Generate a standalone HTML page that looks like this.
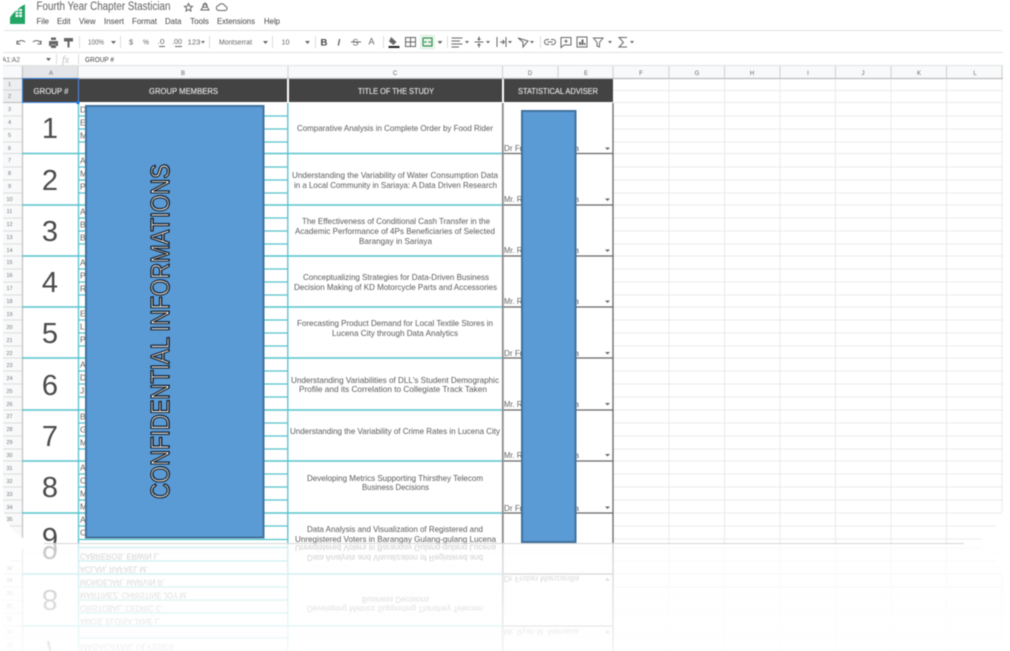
<!DOCTYPE html>
<html><head><meta charset="utf-8"><title>Fourth Year Chapter Stastician</title>
<style>
html,body{margin:0;padding:0;background:#fff;width:1010px;height:651px;overflow:hidden}
svg{display:block;filter:blur(.45px);overflow:hidden}
text{font-family:"Liberation Sans",sans-serif}
.t{font-size:8.4px;fill:#5a5a5a}
.m{font-size:8.5px;fill:#666}
.n{font-size:29px;fill:#4a4a4a;text-anchor:middle}
.h{font-size:8px;fill:#e8e8e8;stroke:#e8e8e8;stroke-width:.12}
.c{font-size:6px;fill:#666;text-anchor:middle}
.r{font-size:5.5px;fill:#777;text-anchor:middle}
.b{font-size:8.5px;fill:#444}
.k{font-size:7.5px;fill:#666}
.a{fill:#666}
.i{fill:none;stroke:#666;stroke-width:1}
</style></head><body>
<svg width="1010" height="651" viewBox="0 0 1010 651" xmlns="http://www.w3.org/2000/svg">
<defs>
<clipPath id="cp"><rect x="3" y="0" width="1000" height="543.5" rx="40" ry="40"/></clipPath>
<clipPath id="rp"><rect x="3" y="544" width="1000" height="107"/></clipPath>
<linearGradient id="fade" x1="0" y1="0" x2="0" y2="1"><stop offset="0" stop-color="#fff" stop-opacity=".68"/><stop offset="1" stop-color="#fff" stop-opacity=".9"/></linearGradient>
</defs>

<g clip-path="url(#cp)">
<rect x="0" y="0" width="1010" height="544" fill="#fff"/>
<!-- top chrome -->
<path d="M10 24V3H25V24Z" fill="#23a566"/>
<path d="M15.5 9H22V17H15.5Z" fill="#fff"/>
<path d="M15.5 11.5H22M15.5 14.3H22M18.7 9V17" stroke="#23a566" stroke-width=".9"/>
<text x="36.5" y="10" font-size="11.5" fill="#5f5f5f" textLength="134" lengthAdjust="spacingAndGlyphs">Fourth Year Chapter Stastician</text>
<path class="i" d="M188.500 3.500L189.700 6.100L192.500 6.400L190.400 8.300L191 11L188.500 9.600L186 11L186.600 8.300L184.500 6.400L187.300 6.100Z" stroke-width=".8"/>
<path class="i" d="M205 3L209 10H201ZM205 7.500a2 2 0 1 1 .1 0" stroke-width=".8"/>
<path class="i" d="M219 10.500a2.500 2.500 0 0 1 -.3 -5a3.500 3.500 0 0 1 6.300 .6a2.200 2.200 0 0 1 -.3 4.400Z" stroke-width=".8"/>
<text class="b" x="36.500" y="24" textLength="12.500" lengthAdjust="spacingAndGlyphs">File</text>
<text class="b" x="57" y="24" textLength="13.500" lengthAdjust="spacingAndGlyphs">Edit</text>
<text class="b" x="79" y="24" textLength="16.500" lengthAdjust="spacingAndGlyphs">View</text>
<text class="b" x="104" y="24" textLength="20" lengthAdjust="spacingAndGlyphs">Insert</text>
<text class="b" x="132" y="24" textLength="25" lengthAdjust="spacingAndGlyphs">Format</text>
<text class="b" x="165" y="24" textLength="16.500" lengthAdjust="spacingAndGlyphs">Data</text>
<text class="b" x="190" y="24" textLength="19" lengthAdjust="spacingAndGlyphs">Tools</text>
<text class="b" x="217" y="24" textLength="38" lengthAdjust="spacingAndGlyphs">Extensions</text>
<text class="b" x="264" y="24" textLength="16" lengthAdjust="spacingAndGlyphs">Help</text>
<path d="M3 30.500H1003M3 52.500H1003M3 65.500H1003" stroke="#e2e2e2" stroke-width="1"/>

<!-- toolbar -->
<path class="i" stroke-width="1.100" d="M17 43.500a4.500 3.500 0 0 1 8 -1.500M17 40.500V44H20.500"/>
<path class="i" stroke-width="1.100" d="M41 43.500a4.500 3.500 0 0 0 -8 -1.500M41 40.500V44H37.500"/>
<path d="M49 41H58V46H56V44.500H51V46H49ZM51 37.500H56V40H51ZM51 45H56V48H51Z" class="a"/>
<path d="M64 38H73V41.500H64ZM67.500 41.500H69.500V47.500H67.500Z" class="a"/>
<path d="M79.500 36V48M120.500 36V48M209.500 36V48M272.500 36V48M315.500 36V48M383.500 36V48M447.500 36V48M540.500 36V48" stroke="#ddd"/>
<text class="k" x="88" y="44.500" textLength="16" lengthAdjust="spacingAndGlyphs">100%</text>
<path class="a" d="M111 41H116L113.500 44ZM263 41H268L265.500 44ZM305 41H310L307.500 44ZM201 41H205L203 43.500ZM437.500 41H442.500L440 44ZM465 41H469L467 43.500ZM486 41H490L488 43.500ZM508 41H512L510 43.500ZM530 41H534L532 43.500ZM608 41H612L610 43.500ZM630 41H634L632 43.500Z"/>
<text class="k" x="129" y="44.500">$</text>
<text class="k" x="143" y="44.500" textLength="6" lengthAdjust="spacingAndGlyphs">%</text>
<text class="k" x="157.500" y="44" textLength="7" lengthAdjust="spacingAndGlyphs">.0</text>
<path class="i" d="M159 46.500H165" stroke-width=".8"/>
<text class="k" x="172" y="44" textLength="10" lengthAdjust="spacingAndGlyphs">.00</text>
<path class="i" d="M175 46.500H182" stroke-width=".8"/>
<text class="k" x="187.500" y="44.500" textLength="13" lengthAdjust="spacingAndGlyphs">123</text>
<text class="k" x="219" y="44.500" textLength="33" lengthAdjust="spacingAndGlyphs">Montserrat</text>
<text class="k" x="281.500" y="44.500" textLength="8" lengthAdjust="spacingAndGlyphs">10</text>
<text x="320.500" y="45.500" font-size="9.500" font-weight="bold" fill="#444">B</text>
<text x="337.500" y="45.500" font-size="9.500" font-style="italic" font-weight="bold" fill="#666">I</text>
<text x="352.500" y="45.500" font-size="9" fill="#666">S</text>
<path d="M351 42H361" stroke="#666"/>
<text x="368.500" y="44.500" font-size="9" fill="#666">A</text>
<path d="M391 37L396.500 42L393.500 45L389 41.500Z" class="a"/>
<rect x="388.500" y="46" width="11" height="2" fill="#222"/>
<path class="i" d="M405.500 37.500H415.500V46.500H405.500ZM405.500 42H415.500M410.500 37.500V46.500"/>
<rect x="420" y="34.500" width="15" height="15" fill="#e6f4ea"/>
<path d="M423 38H432V46H423M423 38V46M432 38V46M424 42H426.500M428.500 42H431" fill="none" stroke="#188038" stroke-width="1"/>
<path class="i" d="M451.500 38H462.500M451.500 41H460M451.500 44H462.500M451.500 47H459"/>
<path class="i" d="M474.500 42H483.500M479 36.500V40.500M479 43.500V47.500"/>
<path class="a" d="M477 38.500H481L479 41ZM477 45.500H481L479 43Z"/>
<path class="i" d="M497 37V47M506 37V47M500 42H504.500M502.500 40L504.500 42L502.500 44"/>
<path class="i" d="M518 38L528 41L523 47L523 42ZM518 38L523 42"/>
<path class="i" stroke-width="1.100" d="M549 39.500H547a2.500 2.500 0 0 0 0 5H549M551 39.500H553a2.500 2.500 0 0 1 0 5H551M547.500 42H552.500"/>
<path class="i" d="M561 37.500H571V45H564L561 47.500ZM566 39.500V43M564.200 41.200H567.800"/>
<path class="i" d="M577 37H587V47H577Z"/><path class="a" d="M579 45V42H581V45ZM581.500 45V39.500H583.500V45ZM584 45V43H585.500V45Z"/>
<path class="i" d="M593.500 38H603L599.500 42.500V47L597 46V42.500Z"/>
<path class="i" stroke-width="1.100" d="M627 37.500H619L623.500 42.500L619 47H627"/>

<!-- formula bar -->
<text class="k" x="2" y="62" textLength="18" lengthAdjust="spacingAndGlyphs">A1:A2</text>
<path class="a" d="M46 58H51L48.500 61Z"/>
<path d="M56.500 54V64M78.500 54V64" stroke="#ddd"/>
<text x="62" y="63" font-size="10" font-style="italic" fill="#bbb" style="font-family:'Liberation Serif',serif">fx</text>
<text x="85" y="62" font-size="7.500" fill="#444" textLength="29" lengthAdjust="spacingAndGlyphs">GROUP #</text>

<!-- headers background -->
<rect x="3" y="66" width="1000" height="12" fill="#f8f9fa"/>
<rect x="22" y="66" width="56" height="12" fill="#e3e5e8"/>
<rect x="3" y="66" width="19" height="480" fill="#f8f9fa"/>
<rect x="3" y="78" width="19" height="24" fill="#eceef0"/>

<g id="grid">
<path d="M613 90.500H1003M613 102.500H1003M613 116H1003M613 129H1003M613 142H1003M613 153.500H1003M613 167H1003M613 180H1003M613 193H1003M613 205H1003M613 218H1003M613 231H1003M613 244H1003M613 256H1003M613 269H1003M613 282H1003M613 295H1003M613 307H1003M613 320H1003M613 333H1003M613 346H1003M613 358H1003M613 371H1003M613 384H1003M613 397H1003M613 410H1003M613 423H1003M613 436H1003M613 449H1003M613 461H1003M613 474H1003M613 487H1003M613 500H1003M613 513H1003M613 526H1003M613 539H1003" stroke="#ebebeb" stroke-width="1"/>
<path d="M669 78V544M724.500 78V544M780 78V544M835.500 78V544M891 78V544M946.500 78V544M1002 78V544" stroke="#ebebeb" stroke-width="1"/>
<path d="M3 116H22M3 129H22M3 142H22M3 153.500H22M3 167H22M3 180H22M3 193H22M3 205H22M3 218H22M3 231H22M3 244H22M3 256H22M3 269H22M3 282H22M3 295H22M3 307H22M3 320H22M3 333H22M3 346H22M3 358H22M3 371H22M3 384H22M3 397H22M3 410H22M3 423H22M3 436H22M3 449H22M3 461H22M3 474H22M3 487H22M3 500H22M3 513H22M3 526H22M3 539H22" stroke="#dcdcdc" stroke-width="1"/>
<path d="M22.500 66V544" stroke="#c4c4c4" stroke-width="1.300"/>
<!-- member rows -->
<path d="M78 116H288M78 129H288M78 142H288M78 167H288M78 180H288M78 193H288M78 218H288M78 231H288M78 244H288M78 269H288M78 282H288M78 295H288M78 320H288M78 333H288M78 346H288M78 371H288M78 384H288M78 397H288M78 423H288M78 436H288M78 449H288M78 474H288M78 487H288M78 500H288M78 526H288M78 539.500H288" stroke="#55c3cc" stroke-width="1.200"/>
<path d="M22 153.500H502M22 205H502M22 256H502M22 307H502M22 358H502M22 410H502M22 461H502M22 513H502" stroke="#55c3cc" stroke-width="1.400"/>
<path d="M78.500 103V544M287.800 103V544" stroke="#55c3cc" stroke-width="1.300"/>
<path d="M503 153.500H613M503 205H613M503 256H613M503 307H613M503 358H613M503 410H613M503 461H613M503 513H613" stroke="#666" stroke-width="1.200"/>
<path d="M502.800 103V544" stroke="#8a8a8a" stroke-width="1.800"/>
<path d="M613 103V544" stroke="#666" stroke-width="1.300"/>
<path class="a" d="M605 147.500H610L607.500 150ZM605 198.500H610L607.500 201ZM605 249.500H610L607.500 252ZM605 300.500H610L607.500 303ZM605 352H610L607.500 354.500ZM605 403H610L607.500 405.500ZM605 454H610L607.500 456.500ZM605 506.500H610L607.500 509Z"/>
</g>

<path d="M3 78.500H1003" stroke="#bdbdbd" stroke-width="1.300"/>
<path d="M3 90H22" stroke="#d5d5d5"/>
<path d="M3 102.500H22" stroke="#bbb"/>
<path d="M78 66V78M288 66V78M502.500 66V78M558 66V78M613 66V78M669 66V78M724.500 66V78M780 66V78M835.500 66V78M891 66V78M946.500 66V78M1002 66V78" stroke="#d0d0d0"/>

<text class="c" x="51" y="75">A</text><text class="c" x="183" y="75">B</text><text class="c" x="395" y="75">C</text><text class="c" x="530" y="75">D</text><text class="c" x="586" y="75">E</text><text class="c" x="641" y="75">F</text><text class="c" x="697" y="75">G</text><text class="c" x="752" y="75">H</text><text class="c" x="808" y="75">I</text><text class="c" x="863" y="75">J</text><text class="c" x="919" y="75">K</text><text class="c" x="975" y="75">L</text>

<text class="r" x="9.500" y="86">1</text><text class="r" x="9.500" y="98">2</text><text class="r" x="9.500" y="111">3</text><text class="r" x="9.500" y="124">4</text><text class="r" x="9.500" y="137">5</text><text class="r" x="9.500" y="150">6</text><text class="r" x="9.500" y="162">7</text><text class="r" x="9.500" y="175">8</text><text class="r" x="9.500" y="188">9</text><text class="r" x="9.500" y="201">10</text><text class="r" x="9.500" y="213">11</text><text class="r" x="9.500" y="226">12</text><text class="r" x="9.500" y="239">13</text><text class="r" x="9.500" y="252">14</text><text class="r" x="9.500" y="264">15</text><text class="r" x="9.500" y="277">16</text><text class="r" x="9.500" y="290">17</text><text class="r" x="9.500" y="303">18</text><text class="r" x="9.500" y="316">19</text><text class="r" x="9.500" y="329">20</text><text class="r" x="9.500" y="342">21</text><text class="r" x="9.500" y="355">22</text><text class="r" x="9.500" y="367">23</text><text class="r" x="9.500" y="380">24</text><text class="r" x="9.500" y="393">25</text><text class="r" x="9.500" y="406">26</text><text class="r" x="9.500" y="418">27</text><text class="r" x="9.500" y="431">28</text><text class="r" x="9.500" y="444">29</text><text class="r" x="9.500" y="457">30</text><text class="r" x="9.500" y="470">31</text><text class="r" x="9.500" y="483">32</text><text class="r" x="9.500" y="496">33</text><text class="r" x="9.500" y="509">34</text><text class="r" x="9.500" y="521">35</text>

<!-- dark header cells -->
<rect x="23" y="79" width="55" height="23" fill="#434343"/>
<rect x="79" y="79" width="208" height="23" fill="#434343"/>
<rect x="289" y="79" width="213" height="23" fill="#434343"/>
<rect x="504" y="79" width="109" height="23" fill="#434343"/>
<rect x="22.500" y="78.500" width="56" height="24" fill="none" stroke="#1a73e8" stroke-width=".8"/>
<rect x="76.500" y="101" width="3" height="3" fill="#1a73e8"/>
<text class="h" x="33.500" y="94" textLength="35" lengthAdjust="spacingAndGlyphs">GROUP #</text>
<text class="h" x="149" y="94" textLength="69" lengthAdjust="spacingAndGlyphs">GROUP MEMBERS</text>
<text class="h" x="358" y="94" textLength="76" lengthAdjust="spacingAndGlyphs">TITLE OF THE STUDY</text>
<text class="h" x="518" y="94" textLength="80" lengthAdjust="spacingAndGlyphs">STATISTICAL ADVISER</text>

<!-- group numbers -->
<text class="n" x="50" y="138">1</text><text class="n" x="50" y="190">2</text><text class="n" x="50" y="241">3</text><text class="n" x="50" y="292">4</text><text class="n" x="50" y="343">5</text><text class="n" x="50" y="395">6</text><text class="n" x="50" y="446">7</text><text class="n" x="50" y="497">8</text><text class="n" x="50" y="548">9</text>

<!-- member initials -->
<text class="m" x="80" y="112.500">D</text><text class="m" x="80" y="125.500">E</text><text class="m" x="80" y="138.500">M</text>
<text class="m" x="80" y="163.500">A</text><text class="m" x="80" y="176.500">M</text><text class="m" x="80" y="189.500">P</text>
<text class="m" x="80" y="214.500">A</text><text class="m" x="80" y="227.500">B</text><text class="m" x="80" y="240.500">B</text>
<text class="m" x="80" y="265.500">A</text><text class="m" x="80" y="278.500">P</text><text class="m" x="80" y="291.500">R</text>
<text class="m" x="80" y="316.500">E</text><text class="m" x="80" y="329.500">L</text><text class="m" x="80" y="342.500">P</text>
<text class="m" x="80" y="367.500">A</text><text class="m" x="80" y="380.500">D</text><text class="m" x="80" y="393.500">J</text>
<text class="m" x="80" y="419.500">B</text><text class="m" x="80" y="432.500">G</text><text class="m" x="80" y="445.500">M</text>
<text class="m" x="80" y="470.500">A</text><text class="m" x="80" y="483.500">C</text><text class="m" x="80" y="496.500">M</text><text class="m" x="80" y="509.500">M</text>
<text class="m" x="80" y="522.500">A</text><text class="m" x="80" y="535.500">C</text>

<!-- titles -->
<text class="t" x="297" y="131" textLength="196" lengthAdjust="spacingAndGlyphs">Comparative Analysis in Complete Order by Food Rider</text>
<text class="t" x="292" y="178" textLength="206" lengthAdjust="spacingAndGlyphs">Understanding the Variability of Water Consumption Data</text>
<text class="t" x="294" y="188" textLength="203" lengthAdjust="spacingAndGlyphs">in a Local Community in Sariaya: A Data Driven Research</text>
<text class="t" x="302" y="224" textLength="188" lengthAdjust="spacingAndGlyphs">The Effectiveness of Conditional Cash Transfer in the</text>
<text class="t" x="295" y="234" textLength="200" lengthAdjust="spacingAndGlyphs">Academic Performance of 4Ps Beneficiaries of Selected</text>
<text class="t" x="359" y="244" textLength="73" lengthAdjust="spacingAndGlyphs">Barangay in Sariaya</text>
<text class="t" x="303" y="280" textLength="186" lengthAdjust="spacingAndGlyphs">Conceptualizing Strategies for Data-Driven Business</text>
<text class="t" x="294" y="290" textLength="203" lengthAdjust="spacingAndGlyphs">Decision Making of KD Motorcycle Parts and Accessories</text>
<text class="t" x="297" y="326" textLength="196" lengthAdjust="spacingAndGlyphs">Forecasting Product Demand for Local Textile Stores in</text>
<text class="t" x="332" y="336" textLength="126" lengthAdjust="spacingAndGlyphs">Lucena City through Data Analytics</text>
<text class="t" x="291" y="383" textLength="208" lengthAdjust="spacingAndGlyphs">Understanding Variabilities of DLL's Student Demographic</text>
<text class="t" x="299" y="392" textLength="188" lengthAdjust="spacingAndGlyphs">Profile and its  Correlation to Collegiate Track Taken</text>
<text class="t" x="290" y="434" textLength="210" lengthAdjust="spacingAndGlyphs">Understanding the Variability of Crime Rates in Lucena City</text>
<text class="t" x="307" y="481" textLength="176" lengthAdjust="spacingAndGlyphs">Developing Metrics Supporting Thirsthey Telecom</text>
<text class="t" x="362" y="490" textLength="67" lengthAdjust="spacingAndGlyphs">Business Decisions</text>
<text class="t" x="307" y="532" textLength="176" lengthAdjust="spacingAndGlyphs">Data Analysis and Visualization of Registered and</text>
<text class="t" x="295" y="542" textLength="201" lengthAdjust="spacingAndGlyphs">Unregistered Voters in Barangay Gulang-gulang Lucena</text>

<!-- adviser names -->
<text class="m" x="504" y="151" textLength="75" lengthAdjust="spacingAndGlyphs">Dr Frolan Manzanilla</text>
<text class="m" x="504" y="202" textLength="75" lengthAdjust="spacingAndGlyphs">Mr. Ryan M. Alemania</text>
<text class="m" x="504" y="253" textLength="75" lengthAdjust="spacingAndGlyphs">Mr. Ryan M. Alemania</text>
<text class="m" x="504" y="304" textLength="75" lengthAdjust="spacingAndGlyphs">Mr. Ryan M. Alemania</text>
<text class="m" x="504" y="356" textLength="75" lengthAdjust="spacingAndGlyphs">Dr Frolan Manzanilla</text>
<text class="m" x="504" y="407" textLength="75" lengthAdjust="spacingAndGlyphs">Mr. Ryan M. Alemania</text>
<text class="m" x="504" y="458" textLength="75" lengthAdjust="spacingAndGlyphs">Mr. Ryan M. Alemania</text>
<text class="m" x="504" y="511" textLength="75" lengthAdjust="spacingAndGlyphs">Dr Frolan Manzanilla</text>

<!-- confidential overlays -->
<rect x="86" y="106" width="177.500" height="431.500" fill="#5b9bd5" stroke="#41719c" stroke-width="2"/>
<rect x="522" y="111" width="53.500" height="431" fill="#5b9bd5" stroke="#41719c" stroke-width="2"/>
<text transform="translate(169,499) rotate(-90)" x="1" y="1" font-size="25.500" fill="#2f6fb5" textLength="335" lengthAdjust="spacingAndGlyphs">CONFIDENTIAL INFORMATIONS</text>
<text transform="translate(169,499) rotate(-90)" font-size="25.500" fill="#eef1f5" stroke="#111" stroke-width="1.150" textLength="335" lengthAdjust="spacingAndGlyphs">CONFIDENTIAL INFORMATIONS</text>
</g>

<!-- reflection -->
<g clip-path="url(#rp)">
<g transform="translate(0,1087) scale(1,-1)">
<g clip-path="url(#cp)">
<use href="#grid"/>
<text class="n" x="50" y="446">7</text><text class="n" x="50" y="497">8</text><text class="n" x="50" y="548">9</text>
<text class="r" x="9.500" y="444">29</text><text class="r" x="9.500" y="457">30</text><text class="r" x="9.500" y="470">31</text><text class="r" x="9.500" y="483">32</text><text class="r" x="9.500" y="496">33</text><text class="r" x="9.500" y="509">34</text><text class="r" x="9.500" y="521">35</text>
<text class="m" x="80" y="443" textLength="94" lengthAdjust="spacingAndGlyphs">MASACAYAN, ULYSSES</text>
<text class="m" x="80" y="468.500" textLength="81" lengthAdjust="spacingAndGlyphs">AMOS, ELOISA JANE L.</text>
<text class="m" x="80" y="481.500" textLength="83" lengthAdjust="spacingAndGlyphs">CRISTOBAL, CEDRIC C.</text>
<text class="m" x="80" y="494.500" textLength="108" lengthAdjust="spacingAndGlyphs">MARTINEZ, CHRISTINE JOY M.</text>
<text class="m" x="80" y="507.500" textLength="85" lengthAdjust="spacingAndGlyphs">MONDEJAR, MARVIN R.</text>
<text class="m" x="80" y="520.500" textLength="68" lengthAdjust="spacingAndGlyphs">ACLAN, RAFAEL M.</text>
<text class="m" x="80" y="533.500" textLength="80" lengthAdjust="spacingAndGlyphs">CABREROS, ERWIN L.</text>
<text class="t" x="290" y="434" textLength="210" lengthAdjust="spacingAndGlyphs">Understanding the Variability of Crime Rates in Lucena City</text>
<text class="t" x="307" y="481" textLength="176" lengthAdjust="spacingAndGlyphs">Developing Metrics Supporting Thirsthey Telecom</text>
<text class="t" x="362" y="490" textLength="67" lengthAdjust="spacingAndGlyphs">Business Decisions</text>
<text class="t" x="307" y="532" textLength="176" lengthAdjust="spacingAndGlyphs">Data Analysis and Visualization of Registered and</text>
<text class="t" x="295" y="542" textLength="201" lengthAdjust="spacingAndGlyphs">Unregistered Voters in Barangay Gulang-gulang Lucena</text>
<text class="m" x="504" y="458" textLength="75" lengthAdjust="spacingAndGlyphs">Mr. Ryan M. Alemania</text>
<text class="m" x="504" y="511" textLength="75" lengthAdjust="spacingAndGlyphs">Dr Frolan Manzanilla</text>
</g>
</g>
<rect x="0" y="544" width="1010" height="107" fill="url(#fade)"/>
</g>
<path d="M44 543.500H964" stroke="#d8d8d8" stroke-width="1"/>
</svg>
</body></html>
